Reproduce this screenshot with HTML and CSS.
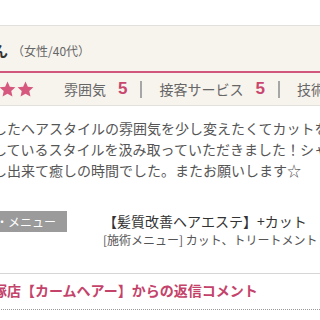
FILE: index.html
```html
<!DOCTYPE html>
<html lang="ja">
<head>
    <meta charset="UTF-8">
    <meta name="viewport" content="width=device-width, initial-scale=1.0">
    <title>口コミ</title>
    <link rel="stylesheet" href="styles.css">
</head>
<body>
    <div class="review">
        <div class="head">
            <span class="name">ゆうさん</span>
            <span class="attr">（女性/40代）</span>
        </div>

        <div class="rates">
            <div class="stars">
                <svg viewBox="0 0 24 24"><path d="M12 0.8l3.3 7.3 7.9.8-5.9 5.3 1.7 7.8L12 17.9l-7 4.1 1.7-7.8L.8 8.9l7.9-.8z"/></svg>
                <svg viewBox="0 0 24 24"><path d="M12 0.8l3.3 7.3 7.9.8-5.9 5.3 1.7 7.8L12 17.9l-7 4.1 1.7-7.8L.8 8.9l7.9-.8z"/></svg>
                <svg viewBox="0 0 24 24"><path d="M12 0.8l3.3 7.3 7.9.8-5.9 5.3 1.7 7.8L12 17.9l-7 4.1 1.7-7.8L.8 8.9l7.9-.8z"/></svg>
                <svg viewBox="0 0 24 24"><path d="M12 0.8l3.3 7.3 7.9.8-5.9 5.3 1.7 7.8L12 17.9l-7 4.1 1.7-7.8L.8 8.9l7.9-.8z"/></svg>
                <svg viewBox="0 0 24 24"><path d="M12 0.8l3.3 7.3 7.9.8-5.9 5.3 1.7 7.8L12 17.9l-7 4.1 1.7-7.8L.8 8.9l7.9-.8z"/></svg>
            </div>
            <div class="rate"><span class="label">雰囲気</span><span class="val">5</span></div>
            <span class="sep"></span>
            <div class="rate"><span class="label">接客サービス</span><span class="val">5</span></div>
            <span class="sep"></span>
            <div class="rate"><span class="label">技術・仕上がり</span><span class="val">5</span></div>
        </div>

        <p class="comment">
            したヘアスタイルの雰囲気を少し変えたくてカットをお願いしました。<br>
            しているスタイルを汲み取っていただきました！シャンプーも気持ちよく、お話<br>
            し出来て癒しの時間でした。またお願いします☆
        </p>

        <div class="menu">
            <div class="menu-label">クーポン・メニュー</div>
            <div class="menu-body">
                <p class="menu-title">【髪質改善ヘアエステ】+カット</p>
                <p class="menu-sub">[施術メニュー] カット、トリートメント</p>
            </div>
        </div>

        <h3 class="reply">平塚店【カームヘアー】からの返信コメント</h3>
    </div>
</body>
</html>
```

FILE: styles.css
```css
* {
    margin: 0;
    padding: 0;
    box-sizing: border-box;
}

html, body {
    overflow: hidden;
}

body {
    background: #fff;
    font-family: "Noto Sans CJK JP", "Liberation Sans", sans-serif;
    color: #555;
    padding-top: 25px;
}

.review {
    margin-left: -7px;
}

.head {
    display: flex;
    align-items: center;
    background-color: #f7f4ee;
    border-top: 1px solid #e2e0dc;
    border-bottom: 2px solid #d2577d;
    padding: 15px 0 10px;
    height: 48px;
    white-space: nowrap;
}

.name {
    font-size: 15px;
    font-weight: bold;
    color: #333;
    margin-left: -45px;
    margin-right: 4px;
    line-height: 20px;
}

.attr {
    font-size: 12px;
    color: #666;
    line-height: 20px;
}

.rates {
    display: flex;
    align-items: center;
    height: 33px;
    background-color: #f7f4ee;
    border-bottom: 1px solid #e3e1dd;
    white-space: nowrap;
}

.rates > * {
    flex-shrink: 0;
}

.stars {
    display: flex;
    gap: 1px;
    margin-left: -48px;
    margin-right: 30px;
}

.stars svg {
    width: 17px;
    height: 17px;
    fill: #d6587e;
}

.rate {
    display: flex;
    align-items: center;
}

.label {
    font-size: 14px;
    color: #666;
    margin-right: 12px;
}

.val {
    font-family: "Liberation Sans", sans-serif;
    font-size: 17px;
    font-weight: bold;
    color: #c9476f;
}

.sep {
    width: 2px;
    height: 17px;
    background-color: #a6a6a6;
    margin: 0 17px 0 13px;
}

.comment {
    margin-top: 12px;
    font-size: 14px;
    line-height: 21px;
    color: #555;
    white-space: nowrap;
}

.menu {
    display: grid;
    grid-template-columns: 110px 1fr;
    margin-top: 30px;
    white-space: nowrap;
}

.menu-label {
    justify-self: end;
    align-self: start;
    margin-right: 36px;
    background-color: #9b9b9b;
    color: #fff;
    font-size: 12px;
    line-height: 21px;
    padding: 0 11px;
}

.menu-title {
    font-size: 14px;
    line-height: 20px;
    color: #333;
}

.menu-sub {
    font-size: 12px;
    line-height: 18px;
    color: #555;
}

.reply {
    margin-top: 24px;
    border-top: 1px solid #d6d6d6;
    border-bottom: 1px dotted #999;
    padding: 6px 0 9px;
    font-size: 14px;
    line-height: 20px;
    font-weight: bold;
    color: #c4436b;
    white-space: nowrap;
    text-indent: -14px;
}
```
